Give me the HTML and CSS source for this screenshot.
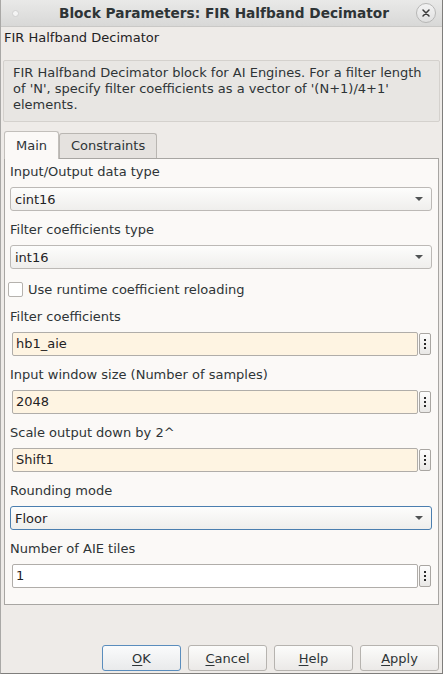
FILE: index.html
```html
<!DOCTYPE html>
<html>
<head>
<meta charset="utf-8">
<link rel="stylesheet" href="styles.css">
</head>
<body>
<div class="window">
  <div class="titlebar">
    <span class="tb-left"><span class="tb-dot"></span></span>
    <span class="tb-title">Block Parameters: FIR Halfband Decimator</span>
    <span class="tb-right"><span class="tb-close"><svg width="10" height="10" viewBox="0 0 10 10"><path d="M2 2 L8 8 M8 2 L2 8" stroke="#3a3a3a" stroke-width="1.5" stroke-linecap="round"/></svg></span></span>
  </div>
  <div class="content">
    <div class="block-name">FIR Halfband Decimator</div>
    <div class="desc">FIR Halfband Decimator block for AI Engines. For a filter length of 'N', specify filter coefficients as a vector of '(N+1)/4+1' elements.</div>
    <div class="tabs">
      <div class="tab active">Main</div>
      <div class="tab">Constraints</div>
    </div>
    <div class="panel">
      <div class="label">Input/Output data type</div>
      <div class="select"><span>cint16</span><span class="arrow"></span></div>
      <div class="label">Filter coefficients type</div>
      <div class="select"><span>int16</span><span class="arrow"></span></div>
      <div class="check-row"><span class="checkbox"></span><span>Use runtime coefficient reloading</span></div>
      <div class="label">Filter coefficients</div>
      <div class="input-row"><div class="input">hb1_aie</div><div class="dots"><i></i><i></i><i></i></div></div>
      <div class="label">Input window size (Number of samples)</div>
      <div class="input-row"><div class="input">2048</div><div class="dots"><i></i><i></i><i></i></div></div>
      <div class="label">Scale output down by 2^</div>
      <div class="input-row"><div class="input">Shift1</div><div class="dots"><i></i><i></i><i></i></div></div>
      <div class="label">Rounding mode</div>
      <div class="select focused"><span>Floor</span><span class="arrow"></span></div>
      <div class="label">Number of AIE tiles</div>
      <div class="input-row"><div class="input white">1</div><div class="dots"><i></i><i></i><i></i></div></div>
    </div>
    <div class="buttons">
      <div class="btn default"><u>O</u>K</div>
      <div class="btn"><u>C</u>ancel</div>
      <div class="btn"><u>H</u>elp</div>
      <div class="btn"><u>A</u>pply</div>
    </div>
  </div>
</div>
</body>
</html>
```

FILE: styles.css
```css
* { box-sizing: border-box; }
html, body { margin: 0; padding: 0; }
body {
  width: 443px;
  height: 674px;
  overflow: hidden;
  font-family: "DejaVu Sans", sans-serif;
  font-size: 13px;
  color: #2e3436;
  background: #eeebe8;
}
.window {
  width: 443px;
  height: 674px;
  display: flex;
  flex-direction: column;
  border-left: 1px solid #a9a8a6;
  border-right: 1px solid #7f7e7c;
  border-bottom: 1px solid #7f7e7c;
  background: #eeebe8;
}
.titlebar {
  height: 27px;
  flex: none;
  display: grid;
  grid-template-columns: 1fr auto 1fr;
  align-items: center;
  padding: 0 6px 0 11px;
  background: linear-gradient(#e9e9e8, #d8d8d7);
  border-bottom: 1px solid #c9c8c6;
}
.tb-left { display: flex; align-items: center; }
.tb-right { display: flex; justify-content: flex-end; align-items: center; }
.tb-dot {
  width: 7px; height: 7px;
  border-radius: 50%;
  background: #f4f4f4;
  border: 1px solid #d0d0d0;
}
.tb-title {
  font-weight: bold;
  font-size: 13.7px;
  color: #2e3436;
}
.tb-close {
  width: 20px; height: 20px;
  border-radius: 50%;
  border: 1px solid #b7b7b6;
  background: linear-gradient(#f3f3f3, #e0e0e0);
  display: flex; align-items: center; justify-content: center;
}
.content {
  flex: 1;
  display: flex;
  flex-direction: column;
  padding: 2px 2px 0 2px;
}
.block-name {
  line-height: 17px;
  margin-left: 1px;
  color: #1f2224;
}
.desc {
  margin-top: 14px;
  height: 62px;
  background: #e8e6e3;
  border: 1px solid #d4d1cd;
  border-radius: 2px;
  padding: 4px 9px;
  line-height: 16px;
  color: #2e3436;
}
.tabs {
  display: flex;
  align-items: flex-end;
  margin-top: 8px;
  padding-left: 1px;
  height: 28px;
  position: relative;
  z-index: 1;
}
.tab {
  height: 25px;
  padding: 4px 11px 0 11px;
  border: 1px solid #b9b6b2;
  border-bottom: none;
  border-radius: 3px 3px 0 0;
  background: #e5e2df;
  color: #2e3436;
}
.tab.active {
  height: 28px;
  padding-top: 6px;
  background: #fbf9f7;
  border-color: #c2bfbb;
  margin-bottom: -1px;
  position: relative;
  z-index: 2;
}
.panel {
  margin: 0 1px 0 1px;
  height: 447px;
  border: 1px solid #a8a6a3;
  background: #fbf9f7;
  padding: 5px 6px 0 5px;
  display: flex;
  flex-direction: column;
}
.label {
  line-height: 16px;
  height: 16px;
  margin-top: 11px;
  margin-bottom: 7px;
  color: #2e3436;
}
.panel > .label:first-child { margin-top: 0; }
.select {
  height: 24px;
  border: 1px solid #bcb9b6;
  border-radius: 3px;
  background: linear-gradient(#fdfdfc, #efeeec);
  display: flex;
  align-items: center;
  justify-content: space-between;
  padding: 0 8px 0 4px;
  color: #1f2224;
}
.select.focused {
  border-color: #4b7eaf;
}
.arrow {
  width: 0; height: 0;
  border-left: 4px solid transparent;
  border-right: 4px solid transparent;
  border-top: 4px solid #505354;
}
.check-row {
  display: flex;
  align-items: center;
  height: 16px;
  margin-top: 12px;
  margin-left: -2px;
  gap: 5px;
  color: #2e3436;
}
.checkbox {
  width: 15px; height: 15px;
  border: 1px solid #b5b2ae;
  border-radius: 2px;
  background: #ffffff;
}
.check-row + .label { margin-top: 12px; }
.input-row {
  display: flex;
  height: 24px;
  padding-left: 2px;
  gap: 1px;
}
.input {
  flex: 1;
  height: 24px;
  border: 1px solid #b0ada9;
  border-radius: 2px;
  background: #fef4e2;
  padding: 0 0 0 3px;
  line-height: 22px;
  color: #1f2224;
}
.input.white { background: #ffffff; }
.dots {
  width: 12px;
  height: 22px;
  margin-top: 1px;
  margin-right: 1px;
  border: 1px solid #a9a6a2;
  border-radius: 2px;
  background: linear-gradient(#fdfdfd, #e9e8e6);
  display: flex;
  flex-direction: column;
  align-items: center;
  justify-content: center;
  gap: 2px;
}
.dots i {
  display: block;
  width: 2px; height: 2px;
  background: #2a2a2a;
}
.buttons {
  display: flex;
  justify-content: flex-end;
  gap: 7px;
  margin-top: 40px;
  padding-right: 1px;
}
.btn {
  width: 79px;
  height: 26px;
  border: 1px solid #b6b3af;
  border-radius: 3px;
  background: linear-gradient(#fcfcfb, #ebe9e7);
  display: flex;
  align-items: center;
  justify-content: center;
  color: #2e3436;
}
.btn.default {
  border-color: #5a8dbd;
  background: linear-gradient(#fafbfc, #e9eaeb);
}
.btn u { text-decoration: underline; text-underline-offset: 2px; }
```
